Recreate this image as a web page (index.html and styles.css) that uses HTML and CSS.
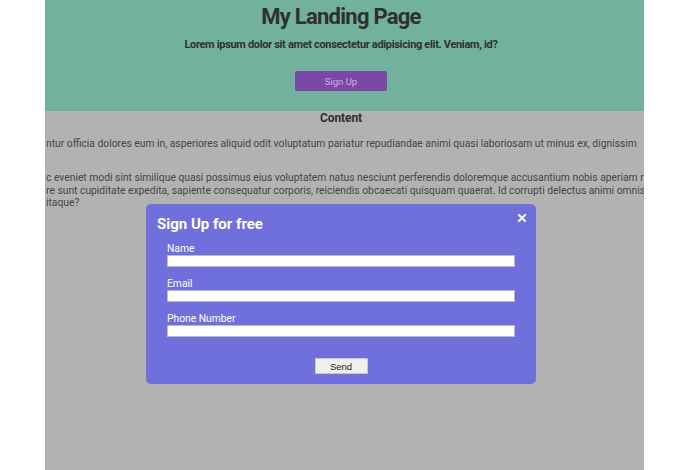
FILE: index.html
```html
<!DOCTYPE html>
<html lang="en">
<head>
<meta charset="utf-8">
<title>My Landing Page</title>
<link rel="stylesheet" href="styles.css">
</head>
<body>
<div class="viewport">
  <header class="hero">
    <h1 class="hero-title">My Landing Page</h1>
    <p class="hero-sub">Lorem ipsum dolor sit amet consectetur adipisicing elit. Veniam, id?</p>
    <button class="hero-btn" type="button">Sign Up</button>
  </header>
  <section class="content">
    <h2 class="content-title">Content</h2>
    <p class="para"><span class="line">ntur officia dolores eum in, asperiores aliquid odit voluptatum pariatur repudiandae animi quasi laboriosam ut minus ex, dignissim</span></p>
    <p class="para para-2"><span class="line">c eveniet modi sint similique quasi possimus eius voluptatem natus nesciunt perferendis doloremque accusantium nobis aperiam r</span><span class="line">re sunt cupiditate expedita, sapiente consequatur corporis, reiciendis obcaecati quisquam quaerat. Id corrupti delectus animi omnis</span><span class="line">itaque?</span></p>
  </section>
  <div class="modal">
    <h3 class="modal-title">Sign Up for free</h3>
    <span class="modal-close" aria-label="Close">
      <svg width="8" height="8" viewBox="0 0 8 8"><path d="M1 1 L7 7 M7 1 L1 7" stroke="#fff" stroke-width="2" stroke-linecap="square"/></svg>
    </span>
    <form class="modal-form">
      <label class="field-label">Name</label>
      <input class="field-input" type="text">
      <label class="field-label">Email</label>
      <input class="field-input" type="text">
      <label class="field-label">Phone Number</label>
      <input class="field-input" type="text">
      <div class="form-actions"><button class="send-btn" type="button">Send</button></div>
    </form>
  </div>
</div>
</body>
</html>
```

FILE: styles.css
```css
* { box-sizing: border-box; }
html, body { margin: 0; padding: 0; background: #ffffff; }
body { font-family: Roboto, "Liberation Sans", sans-serif; }

.viewport {
  margin-left: 45px;
  width: 599px;
  height: 470px;
  background: #b2b2b2;
  position: relative;
  overflow: hidden;
}

.hero {
  height: 111px;
  background: #72b29c;
  text-align: center;
  padding-top: 4px;
  padding-right: 7px;
}
.hero-title {
  margin: 0;
  font-size: 22px;
  line-height: 26px;
  font-weight: 700;
  letter-spacing: -0.75px;
  color: #2f302f;
}
.hero-sub {
  margin: 8px 0 0;
  font-size: 11px;
  line-height: 13px;
  font-weight: 700;
  letter-spacing: -0.33px;
  color: #2f302f;
}
.hero-btn {
  margin-top: 20px;
  width: 92px;
  height: 20px;
  border: none;
  border-radius: 2px;
  background: #7c48a8;
  color: #c9b5dc;
  font-family: Roboto, sans-serif;
  font-size: 9.5px;
  padding: 0;
}

.content { text-align: left; }
.content-title {
  margin: 0;
  padding-right: 7px;
  text-align: center;
  font-size: 12px;
  line-height: 14px;
  font-weight: 700;
  letter-spacing: -0.1px;
  color: #2f2f2f;
}
.para {
  margin: 13px 0 0;
  font-size: 10.3px;
  line-height: 12.3px;
  color: #454545;
  padding-left: 1px;
}
.para-2 { margin-top: 22px; }
.line { display: block; white-space: nowrap; }

.modal {
  position: absolute;
  left: 101px;
  top: 204px;
  width: 390px;
  height: 180px;
  background: #7070dc;
  border-radius: 5px;
  padding: 11px 21px 0 11px;
}
.modal-title {
  margin: 0;
  font-size: 15px;
  line-height: 18px;
  font-weight: 700;
  color: #ffffff;
}
.modal-close {
  position: absolute;
  right: 10px;
  top: 10px;
  width: 8px;
  height: 8px;
  display: block;
}
.modal-close svg { display: block; }
.modal-form {
  margin: 10px 0 0 10px;
  display: flex;
  flex-direction: column;
}
.field-label {
  font-size: 10.3px;
  line-height: 12px;
  color: #ffffff;
}
.field-input {
  width: 348px;
  height: 12px;
  margin: 0 0 11px;
  border: 1px solid #b9b9c8;
  background: #ffffff;
  padding: 0;
}
.form-actions {
  display: flex;
  justify-content: center;
  margin-top: 10px;
}
.send-btn {
  width: 53px;
  height: 16px;
  padding: 0;
  border: 1px solid #c8c8d0;
  background: #efefef;
  color: #222;
  font-family: "Liberation Sans", Arial, sans-serif;
  font-size: 9.5px;
}
```
